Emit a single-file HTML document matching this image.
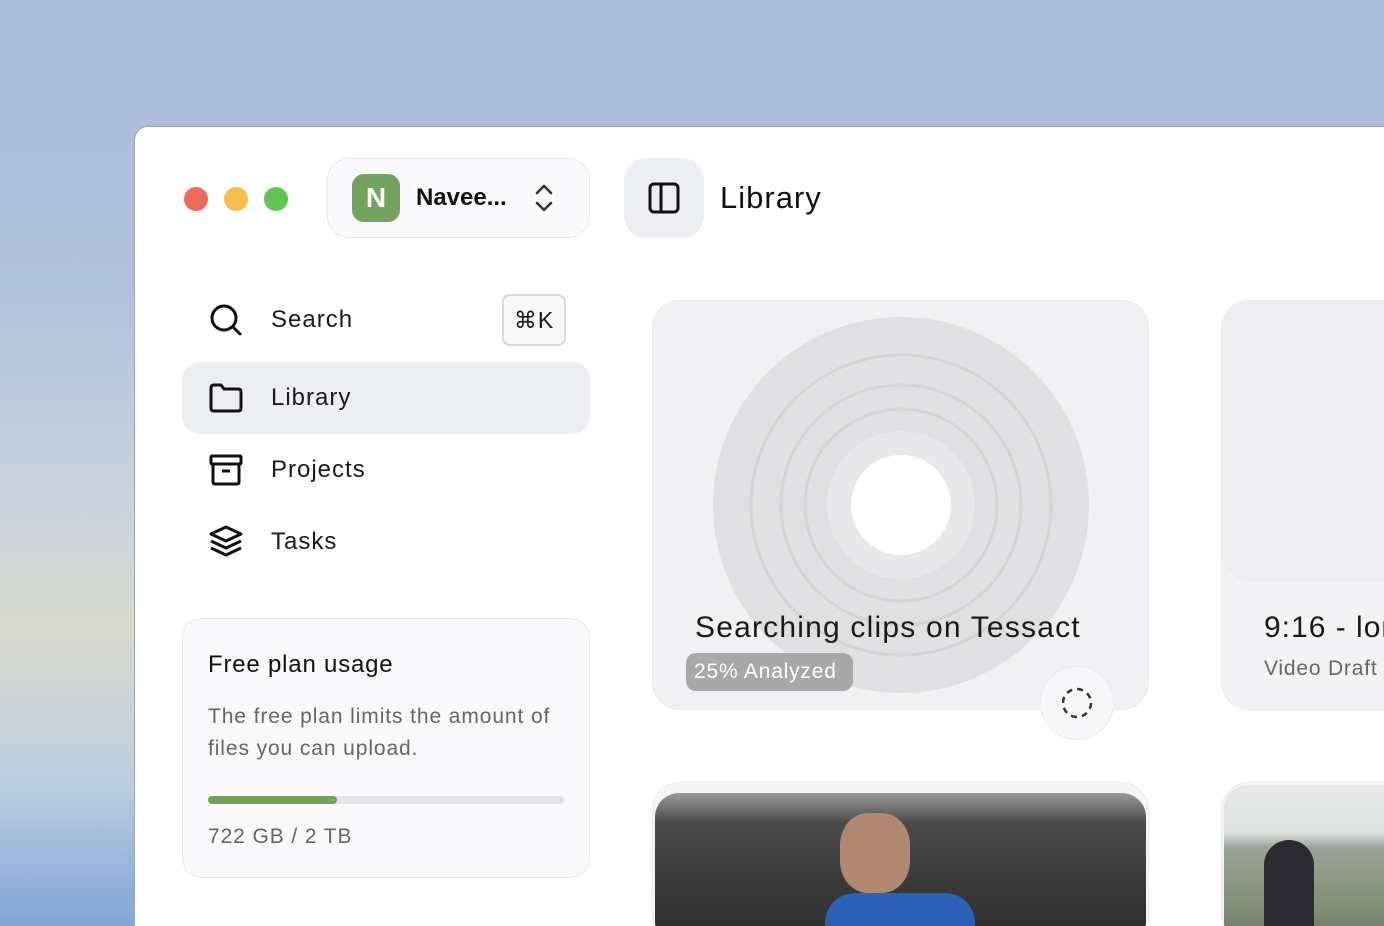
<!DOCTYPE html>
<html style="width:1384px;height:926px;overflow:hidden"><head><meta charset="utf-8"><style>
*{box-sizing:border-box;margin:0;padding:0}
html,body{width:1384px;height:926px;overflow:hidden}
body{position:relative;font-family:"Liberation Sans",sans-serif;
background:linear-gradient(180deg,#a9bcd9 0%,#b0c1dc 30%,#c9d3dd 55%,#d9dacd 68%,#b9cde0 85%,#7fa6d6 100%);}
.win{position:absolute;left:134px;top:126px;width:1300px;height:820px;background:#fff;border-radius:14px 0 0 0;border:1px solid #9aa3b3;border-bottom:none}
.dot{position:absolute;top:187px;width:24px;height:24px;border-radius:50%}
.abs{position:absolute}
.nav{position:absolute;left:182px;width:408px;height:72px;border-radius:18px;display:flex;align-items:center;font-size:24px;color:#1a1a1a;letter-spacing:1px}
.nav svg{position:absolute;left:26px}
.nav span{position:absolute;left:89px}
</style></head><body>
<div class="win"></div>
<div class="dot" style="left:184px;background:#ec6a5e"></div>
<div class="dot" style="left:224px;background:#f4bf4f"></div>
<div class="dot" style="left:264px;background:#61c554"></div>

<div class="abs" style="left:327px;top:158px;width:263px;height:80px;border:1.5px solid #e6e7ec;border-radius:22px;background:#fafafc"></div>
<div class="abs" style="left:352px;top:174px;width:48px;height:48px;border-radius:12px;background:#74a35f;color:#fff;font-weight:bold;font-size:28px;text-align:center;line-height:48px">N</div>
<div class="abs" style="left:416px;top:184px;font-size:24px;font-weight:bold;color:#111">Navee...</div>
<svg class="abs" style="left:532px;top:182px" width="24" height="32" viewBox="0 0 24 32"><path d="M5 11l7-7 7 7M5 21l7 7 7-7" fill="none" stroke="#333" stroke-width="2.6" stroke-linecap="round" stroke-linejoin="round"/></svg>

<div class="abs" style="left:624px;top:158px;width:80px;height:80px;border-radius:22px;background:#edeef2"></div>
<svg class="abs" style="left:647px;top:181px" width="34" height="34" viewBox="0 0 34 34"><rect x="3" y="3" width="28" height="28" rx="4" fill="none" stroke="#111" stroke-width="3"/><line x1="14" y1="3" x2="14" y2="31" stroke="#111" stroke-width="3"/></svg>
<div class="abs" style="left:720px;top:180px;font-size:31px;color:#111;letter-spacing:1px">Library</div>

<div class="nav" style="top:284px"><svg width="36" height="36" viewBox="0 0 36 36"><circle cx="16" cy="16" r="12" fill="none" stroke="#111" stroke-width="3"/><line x1="25" y1="25" x2="32" y2="32" stroke="#111" stroke-width="3" stroke-linecap="round"/></svg><span>Search</span>
<div class="abs" style="left:320px;top:10px;width:64px;height:52px;border:2px solid #d8d9e2;border-radius:8px;background:#f8f8fb;font-size:23px;text-align:center;line-height:48px">⌘K</div></div>
<div class="nav" style="top:362px;background:#edeef2"><svg width="36" height="36" viewBox="0 0 36 36"><path d="M3 8q0-3 3-3h7l3 4h14q3 0 3 3v16q0 3-3 3H6q-3 0-3-3z" fill="none" stroke="#111" stroke-width="3" stroke-linejoin="round"/></svg><span>Library</span></div>
<div class="nav" style="top:434px"><svg width="36" height="36" viewBox="0 0 36 36"><rect x="3" y="4" width="30" height="8" rx="1" fill="none" stroke="#111" stroke-width="3"/><path d="M5 12v18q0 2 2 2h22q2 0 2-2V12" fill="none" stroke="#111" stroke-width="3"/><line x1="14" y1="19" x2="22" y2="19" stroke="#111" stroke-width="3"/></svg><span>Projects</span></div>
<div class="nav" style="top:506px"><svg width="36" height="36" viewBox="0 0 36 36"><path d="M18 3L33 10 18 17 3 10z" fill="none" stroke="#111" stroke-width="3" stroke-linejoin="round"/><path d="M3 17l15 7 15-7M3 24l15 7 15-7" fill="none" stroke="#111" stroke-width="3" stroke-linejoin="round"/></svg><span>Tasks</span></div>

<div class="abs" style="left:182px;top:618px;width:408px;height:260px;border:1.5px solid #e6e7ec;border-radius:20px;background:#f9f9fc"></div>
<div class="abs" style="left:208px;top:651px;font-size:24px;color:#111;letter-spacing:0.8px">Free plan usage</div>
<div class="abs" style="left:208px;top:701px;width:360px;font-size:21px;line-height:32px;color:#666;letter-spacing:0.9px">The free plan limits the amount of files you can upload.</div>
<div class="abs" style="left:208px;top:796px;width:356px;height:8px;border-radius:4px;background:#e4e5ea"><div style="width:129px;height:8px;border-radius:4px;background:#74a35f"></div></div>
<div class="abs" style="left:208px;top:825px;font-size:21px;color:#666;letter-spacing:0.9px">722 GB / 2 TB</div>

<div class="abs" style="left:652px;top:300px;width:497px;height:410px;border-radius:28px;background:#f1f1f3;border:1.5px solid #eaeaee;overflow:hidden">
<svg class="abs" style="left:60px;top:16px" width="376" height="376" viewBox="0 0 376 376"><circle cx="188" cy="188" r="188" fill="#e0e0e2"/><circle cx="188" cy="188" r="150" fill="none" stroke="#d4d4d6" stroke-width="3"/><circle cx="188" cy="188" r="120" fill="none" stroke="#d4d4d6" stroke-width="3"/><circle cx="188" cy="188" r="96" fill="none" stroke="#d4d4d6" stroke-width="3"/><circle cx="188" cy="188" r="74" fill="#e8e8ea"/><circle cx="188" cy="188" r="50" fill="#fff"/></svg>
<div class="abs" style="left:42px;top:310px;font-size:30px;color:#1a1a1a;letter-spacing:1.2px">Searching clips on Tessact</div>
<div class="abs" style="left:33px;top:352px;width:167px;height:38px;border-radius:10px;background:#a8a8aa;color:#fff;font-size:21px;line-height:38px;padding-left:8px;letter-spacing:0.8px">25% Analyzed</div>
</div>
<div class="abs" style="left:1040px;top:666px;width:74px;height:74px;border-radius:50%;background:#f7f7f9;border:1.5px solid #ebebee"></div>
<svg class="abs" style="left:1059px;top:685px" width="36" height="36" viewBox="0 0 36 36"><circle cx="18" cy="18" r="14" fill="none" stroke="#333" stroke-width="2.5" stroke-dasharray="6 5"/></svg>

<div class="abs" style="left:1221px;top:300px;width:200px;height:410px;border-radius:28px;background:#f3f3f5;border:1.5px solid #eaeaee;overflow:hidden">
<div style="position:absolute;left:0;top:0;width:200px;height:280px;background:#eeeef1;border-radius:0 0 0 28px"></div>
<div class="abs" style="left:42px;top:310px;font-size:30px;color:#1a1a1a;letter-spacing:1px">9:16 - long</div>
<div class="abs" style="left:42px;top:356px;font-size:21px;color:#666;letter-spacing:0.8px">Video Draft</div>
</div>

<div class="abs" style="left:652px;top:782px;width:497px;height:160px;border-radius:28px;background:#f5f5f7;border:1.5px solid #eaeaee;overflow:hidden">
<div style="position:absolute;left:2px;top:10px;right:2px;bottom:0;border-radius:24px 24px 0 0;background:linear-gradient(180deg,#9a9a9a 0%,#4a4a4a 20%,#3a3a3a 60%,#2e2e2e 100%)">
<div style="position:absolute;left:185px;top:20px;width:70px;height:80px;border-radius:40%;background:#b08870"></div>
<div style="position:absolute;left:170px;top:100px;width:150px;height:50px;border-radius:30px 30px 0 0;background:#2b62b8"></div>
</div></div>
<div class="abs" style="left:1221px;top:782px;width:200px;height:160px;border-radius:28px;background:#f5f5f7;border:1.5px solid #eaeaee;overflow:hidden">
<div style="position:absolute;left:2px;top:2px;right:0;bottom:0;border-radius:24px 0 0 0;background:linear-gradient(180deg,#e6e8e8 0%,#e0e2e2 30%,#9aa396 40%,#7e8f74 80%,#6b7568 100%)">
<div style="position:absolute;left:40px;top:55px;width:50px;height:90px;border-radius:25px 25px 0 0;background:#2a2a30"></div>
</div></div>
</body></html>
